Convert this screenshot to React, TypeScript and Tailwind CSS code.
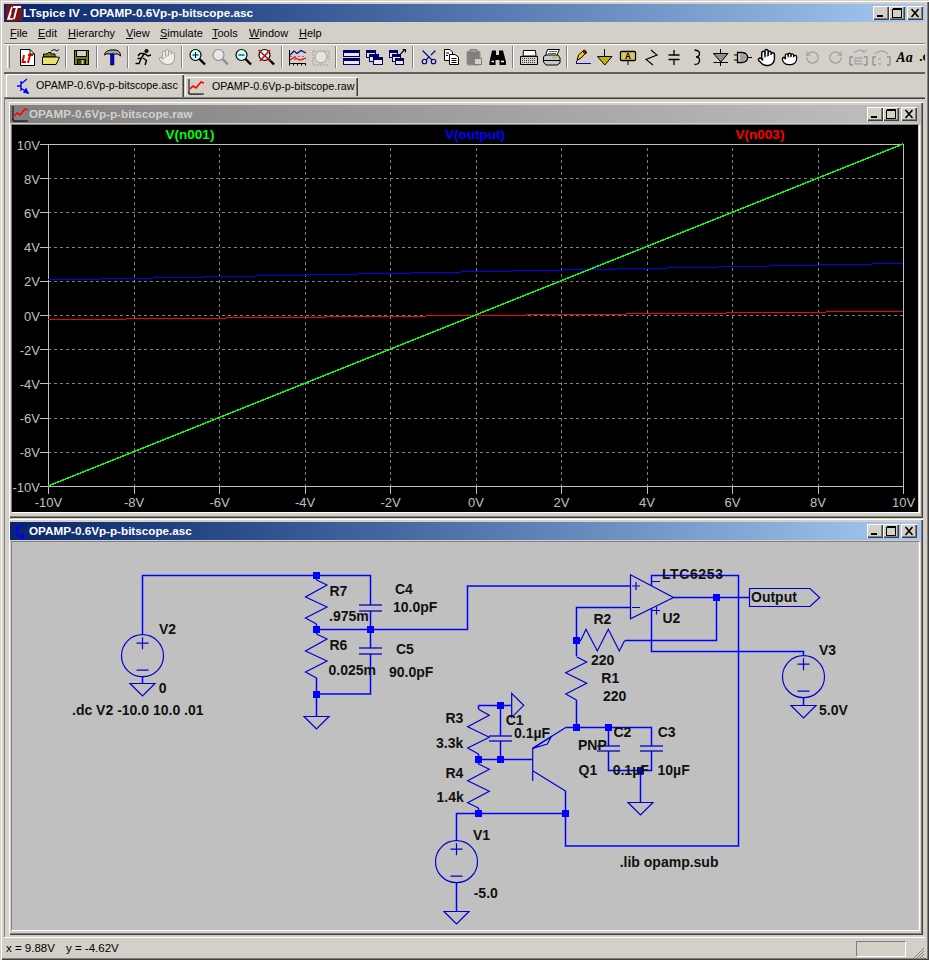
import React from "react";
import { Hand, Grab, Scissors, RotateCcw, RotateCw } from "lucide-react";

const WIRE = "#0000ff";
const SYM = "#0000d0";

const LTLogo = ({ color = "#fff" }: { color?: string }) => (
  <svg width="16" height="16" viewBox="0 0 16 16">
    <rect width="16" height="16" fill="#7a1414" />
    <path d="M6 2 L2 14 H7 M5 7 L3 13" stroke={color} strokeWidth="1.6" fill="none" />
    <path d="M7 2 H15 M11 2 L8 14" stroke={color} strokeWidth="1.8" fill="none" />
  </svg>
);

const TransistorIcon = () => (
  <svg width="16" height="16" viewBox="0 0 16 16" fill="none" stroke="#0000ff" strokeWidth="1.4">
    <path d="M1 8 H5 M5 3 V13 M5 6 L11 1 M5 10 L12 15" />
    <path d="M12 15 L8 14 L10 11 Z" fill="#0000ff" />
  </svg>
);

const PlotIcon = () => (
  <svg width="16" height="16" viewBox="0 0 16 16" fill="none">
    <path d="M1 0 V15 H16" stroke="#000" />
    <path d="M0 13.5 H1 M3 15 V16 M6 15 V16 M9 15 V16 M12 15 V16" stroke="#000" />
    <path d="M2 10 L5 7 L8 9 L13 3 L16 4" stroke="#ff0000" strokeWidth="1.6" />
  </svg>
);

const WinButton = ({ kind }: { kind: "min" | "max" | "close" }) => (
  <div className="w-[16px] h-[14px] bg-[#d4d0c8] shadow-[inset_1px_1px_0_#fff,inset_-1px_-1px_0_#404040,inset_-2px_-2px_0_#808080] flex items-center justify-center">
    <svg width="12" height="10" viewBox="0 0 12 10" shapeRendering="crispEdges" fill="none" stroke="#000">
      {kind === "min" && <path d="M2 8.5 H8 M2 7.5 H8" />}
      {kind === "max" && <path d="M1.5 0.5 H10.5 M1.5 1.5 H10.5 V9.5 H1.5 Z" />}
      {kind === "close" && (
        <g shapeRendering="auto" strokeWidth="1.6">
          <path d="M2.5 1 L9.5 9 M9.5 1 L2.5 9" />
        </g>
      )}
    </svg>
  </div>
);

const WinButtons = () => (
  <div className="flex ml-auto">
    <WinButton kind="min" />
    <WinButton kind="max" />
    <div className="w-[2px]" />
    <WinButton kind="close" />
  </div>
);

const Svg = ({ children }: { children: React.ReactNode }) => (
  <svg width="23" height="24" viewBox="0 0 23 24" fill="none" stroke="#000">
    {children}
  </svg>
);

const Magnifier = ({ off, children }: { off?: boolean; children?: React.ReactNode }) => (
  <>
    <circle cx="9.5" cy="10" r="5.5" fill={off ? "#e8e8e8" : "#c8ffff"} stroke={off ? "#8c8c8c" : "#000"} strokeWidth="1.2" />
    <path d="M13.5 14 L19 19.5" stroke={off ? "#8c8c8c" : "#000"} strokeWidth="2.4" />
    {children}
  </>
);

const MiniWin = ({ x, y, w, h }: { x: number; y: number; w: number; h: number }) => (
  <>
    <rect x={x} y={y} width={w} height={h} fill="#e8e8f0" stroke="#000060" />
    <rect x={x} y={y} width={w} height="2" fill="#000080" stroke="#000060" />
  </>
);

const iconSet: Record<string, React.ReactNode> = {
  new: (
    <Svg>
      <path d="M4.5 4.5 H14 L18.5 9 V20.5 H4.5 Z" fill="#fff" />
      <path d="M14 4.5 V9 H18.5" />
      <path d="M8 10 L6.5 17 H10 M12 10 H17 M14 10 L12 18" stroke="#e00000" strokeWidth="2" />
    </Svg>
  ),
  open: (
    <Svg>
      <path d="M4.5 9 H8 L9.5 7.5 H12 V9 H16 V12 H4.5 Z" fill="#808000" />
      <path d="M3.5 19.5 V12 H18 L20.5 12.5 L17 19.5 Z" fill="#e8e070" />
      <path d="M12 6 Q15 3 18 6 M18 6 L20 4.5 M18 6 L16.5 5" stroke="#202020" />
    </Svg>
  ),
  save: (
    <Svg>
      <rect x="4.5" y="5.5" width="14" height="14" fill="#808000" />
      <rect x="6.5" y="5.5" width="10" height="6" fill="#d4d0c8" stroke="#000" />
      <rect x="7.5" y="14.5" width="8" height="5" fill="#404000" />
      <rect x="11.5" y="15" width="2" height="4" fill="#d4d0c8" stroke="none" />
    </Svg>
  ),
  hammer: (
    <Svg>
      <path d="M3.5 10 Q4 6 9.5 5 H15 Q19.5 6 19.5 11 Q17 8 14 9 H9 Q5.5 8 3.5 10 Z" fill="#a8a8a8" />
      <rect x="9.5" y="9" width="3.5" height="11" fill="#0000e0" stroke="#000" strokeWidth="0.5" />
    </Svg>
  ),
  run: (
    <Svg>
      <circle cx="14.5" cy="6" r="1.6" fill="#000" />
      <path d="M12.5 8.5 L9 13.5 L5.5 13.5 M12.5 8.5 L16 11 L19 10 M12.5 8.5 L8 8.5 L6 11 M11 13 L14.5 15.5 L13 20 M9 14 L7 18.5 L3.5 18.5" strokeWidth="1.4" />
    </Svg>
  ),
  handOff: (
    <div className="w-[23px] h-[24px] flex items-center justify-center">
      <Hand size={18} color="#a8a8a0" fill="#eeeeea" strokeWidth={1.5} />
    </div>
  ),
  zoomIn: (
    <Svg>
      <Magnifier>
        <path d="M6.5 10 H12.5 M9.5 7 V13" />
      </Magnifier>
    </Svg>
  ),
  zoomOff: (
    <Svg>
      <Magnifier off />
    </Svg>
  ),
  zoomOut: (
    <Svg>
      <Magnifier>
        <path d="M6.5 10 H12.5" />
      </Magnifier>
    </Svg>
  ),
  zoomFit: (
    <Svg>
      <Magnifier>
        <path d="M3.5 5 L15.5 16 M15 5 L5 16" stroke="#e00000" strokeWidth="1.6" />
      </Magnifier>
    </Svg>
  ),
  plot: (
    <Svg>
      <path d="M3.5 5 V18.5 H20" />
      <path d="M3.5 18.5 V20.5 M7.5 18.5 V20.5 M11.5 18.5 V20.5 M15.5 18.5 V20.5 M19.5 18.5 V20.5" />
      <path d="M4 14.5 H20 M4 11.5 H20" stroke="#808080" strokeDasharray="2 2" />
      <path d="M4 10 L8 6 L11 8.5 L15 5.5 L20 8" stroke="#000080" strokeWidth="1.1" />
      <path d="M4 15 L8 12.5 L14 15 L20 13" stroke="#ff0000" strokeWidth="1.2" />
    </Svg>
  ),
  plotOff: (
    <Svg>
      <path d="M4 6 V20 H20 M4 6 H8 M15 6 H20 V16" stroke="#a0a0a0" strokeDasharray="2 1" />
      <circle cx="12" cy="12" r="6" stroke="#a0a0a0" fill="#e6e4de" />
    </Svg>
  ),
  tile: (
    <Svg>
      <MiniWin x={3.5} y={5.5} w={16} h={6} />
      <MiniWin x={3.5} y={13.5} w={16} h={6} />
    </Svg>
  ),
  cascade: (
    <Svg>
      <MiniWin x={3.5} y={5.5} w={9} h={7} />
      <MiniWin x={6.5} y={9.5} w={9} h={7} />
      <MiniWin x={10.5} y={12.5} w={9} h={7} />
    </Svg>
  ),
  cascade2: (
    <Svg>
      <MiniWin x={3.5} y={5.5} w={8} h={7} />
      <MiniWin x={6.5} y={9.5} w={8} h={7} />
      <MiniWin x={9.5} y={13.5} w={8} h={6} />
      <path d="M14.5 9 L19 4.5 M16.5 4.5 H19.5 V7.5" strokeWidth="1.1" />
    </Svg>
  ),
  cut: (
    <div className="w-[23px] h-[24px] flex items-center justify-center">
      <Scissors size={18} color="#000080" strokeWidth={1.6} className="-rotate-90" />
    </div>
  ),
  copy: (
    <Svg>
      <path d="M4.5 4.5 H10 L12.5 7 V15.5 H4.5 Z" fill="#fff" />
      <path d="M9.5 9.5 H15 L18.5 12 V19.5 H9.5 Z" fill="#fff" />
      <path d="M6 8 H9 M6 10.5 H8 M11.5 13.5 H16.5 M11.5 15.5 H16.5 M11.5 17.5 H16.5" />
    </Svg>
  ),
  paste: (
    <Svg>
      <rect x="4" y="6" width="13" height="14" rx="1.5" fill="#808080" stroke="#909090" />
      <rect x="7.5" y="4.5" width="6" height="3" fill="#a0a0a0" stroke="#808080" />
      <rect x="11.5" y="13.5" width="7" height="6" fill="#d4d0c8" stroke="#808080" />
    </Svg>
  ),
  binoc: (
    <Svg>
      <path d="M6 5.5 H10 V10 H13 V5.5 H17 L20 17 V20 H13.5 V15 H9.5 V20 H3.5 V17 Z" fill="#000" stroke="none" />
      <path d="M5.5 16.5 H8 M15 16.5 H18" stroke="#fff" strokeWidth="1.4" />
    </Svg>
  ),
  preview: (
    <Svg>
      <path d="M6.5 5.5 H18.5 L19 11 H6 Z" fill="#fff" />
      <path d="M3.5 11.5 H20.5 V19.5 H3.5 Z" fill="#d4d0c8" />
      <path d="M5 13.5 H19 M5 15.5 H19 M5 17.5 H19" stroke="#404040" strokeDasharray="1 1" />
    </Svg>
  ),
  print: (
    <Svg>
      <path d="M7.5 4.5 H19.5 L16.5 11 H5.5 Z" fill="#fff" />
      <path d="M9 6.5 H17 M8 8.5 H16" stroke="#606060" />
      <path d="M3.5 12 Q4 10 7 10 H18 L20 13 V18 L17 20 H6 L3.5 17 Z" fill="#c8c8c8" />
      <path d="M4 15.5 H20" />
      <path d="M12 12.5 H17" stroke="#c0c000" strokeWidth="1.5" />
    </Svg>
  ),
  pencil: (
    <Svg>
      <path d="M6 15.5 L7.5 10 L13 5 L15.5 7 L10 13 Z" fill="#f0d000" />
      <path d="M13 5 L15.5 7 L14.5 9 L11.5 6.5 Z" fill="#e00000" stroke="#000" />
      <path d="M5 18.5 H20" stroke="#0000e0" />
      <path d="M5.5 18.5 V16" />
    </Svg>
  ),
  ground: (
    <Svg>
      <path d="M10.5 4 V11.5" />
      <path d="M3.5 11.5 H18 L10.75 20 Z" fill="#b8b800" />
    </Svg>
  ),
  label: (
    <Svg>
      <rect x="3.5" y="6.5" width="15" height="9" rx="1" fill="#d8c860" strokeWidth="1.3" />
      <text x="11" y="14" textAnchor="middle" fontSize="9" fontFamily="'Liberation Mono',monospace" fontWeight="700" fill="#000" stroke="none">A</text>
      <path d="M11 15.5 V20" />
    </Svg>
  ),
  res: (
    <Svg>
      <path d="M11 5 L17 10 L6 14.5 L13 20" strokeWidth="1.1" />
    </Svg>
  ),
  cap: (
    <Svg>
      <path d="M11 5 V10 M11 14.5 V20 M5.5 10 H16.5 M5.5 14.5 H16.5" strokeWidth="1.3" />
    </Svg>
  ),
  ind: (
    <Svg>
      <path d="M8.5 5 Q14 5.5 13.5 9 Q13 12 10 12 Q14 12 13.5 16 Q13 19.5 8.5 19.5" strokeWidth="1.4" />
    </Svg>
  ),
  diode: (
    <Svg>
      <path d="M11.5 4 V8.5 M11.5 17 V21 M4.5 17.5 H19" />
      <path d="M4.5 8.5 H19 L11.75 17 Z" fill="#909090" />
    </Svg>
  ),
  gate: (
    <Svg>
      <path d="M2 10 H5 M2 15 H5 M15 12.5 H20" />
      <path d="M5.5 7.5 H10 Q15.5 8 15.5 12.5 Q15.5 17 10 17.5 H5.5 Z" fill="#d4d0c8" strokeWidth="1.3" />
      <path d="M8 8.5 H10 Q14 9 14 12.5 Q14 16 10 16.5 H8 Z" fill="#a0a0a0" stroke="none" />
    </Svg>
  ),
  handOpen: (
    <div className="w-[23px] h-[24px] flex items-center justify-center">
      <Hand size={19} color="#000" fill="#fff" strokeWidth={1.8} />
    </div>
  ),
  handFist: (
    <div className="w-[23px] h-[24px] flex items-center justify-center">
      <Grab size={17} color="#000" fill="#fff" strokeWidth={1.8} />
    </div>
  ),
  undo: (
    <div className="w-[23px] h-[24px] flex items-center justify-center">
      <RotateCcw size={15} color="#a0a0a0" strokeWidth={2} />
    </div>
  ),
  redo: (
    <div className="w-[23px] h-[24px] flex items-center justify-center">
      <RotateCw size={15} color="#a0a0a0" strokeWidth={2} />
    </div>
  ),
  rot: (
    <Svg>
      <path d="M3 20 V12 H6 M3 20 H6 M20 20 V12 H17 M20 20 H17" stroke="#909090" strokeWidth="1.3" />
      <path d="M8 13 H16 M8 16 H15 M8 19 H16 M8 13 V19" stroke="#a8a8a8" strokeWidth="1.3" />
      <path d="M7 8 Q12 3 18 7 M18 7 L20 4.5 M18 7 L15 7" stroke="#a8a8a8" strokeWidth="1.2" />
    </Svg>
  ),
  mir: (
    <Svg>
      <path d="M3 20 V12 H6 M3 20 H6 M20 20 V12 H17 M20 20 H17" stroke="#909090" strokeWidth="1.3" />
      <path d="M8 14 H11 M8 19 H11" stroke="#a8a8a8" strokeWidth="1.3" />
      <path d="M5 9 Q11 3 18 9" stroke="#a8a8a8" strokeWidth="1.2" />
    </Svg>
  ),
  text: (
    <div className="w-[23px] h-[24px] flex items-center justify-center font-['Liberation_Serif',serif] italic font-bold text-[14px] text-black">Aa</div>
  ),
  op: (
    <div className="w-[23px] h-[24px] flex items-center pl-[3px] font-['Liberation_Sans',sans-serif] font-bold text-[13px] text-black">.op</div>
  ),
};

const groups: string[][] = [
  ["new", "open"],
  ["save"],
  ["hammer"],
  ["run", "handOff"],
  ["zoomIn", "zoomOff", "zoomOut", "zoomFit"],
  ["plot", "plotOff"],
  ["tile", "cascade", "cascade2"],
  ["cut", "copy", "paste", "binoc"],
  ["preview", "print"],
  ["pencil", "ground", "label", "res", "cap", "ind", "diode", "gate", "handOpen", "handFist", "undo", "redo", "rot", "mir", "text", "op"],
];

const ToolSep = () => (
  <div className="w-[8px] h-[24px] flex justify-center shrink-0">
    <div className="w-[2px] h-[22px] mt-px border-l border-[#808080] border-r border-r-white" />
  </div>
);

const Toolbar = () => (
  <div className="h-[29px] mx-[4px] flex items-start pt-[1px] overflow-hidden border-t border-[#808080] shadow-[inset_0_1px_0_#fff] shrink-0">
    <div className="w-[3px] h-[22px] ml-[3px] mr-[6px] mt-px shrink-0 border-l border-white border-r border-r-[#808080]" />
    {groups.map((g, i) => (
      <React.Fragment key={i}>
        {i > 0 && <ToolSep />}
        {g.map((n) => (
          <div key={n} className="w-[23px] h-[24px] shrink-0">
            {iconSet[n]}
          </div>
        ))}
      </React.Fragment>
    ))}
  </div>
);

const menus: [string, string, string][] = [
  ["F", "ile", "w-[28px]"],
  ["E", "dit", "w-[30px]"],
  ["H", "ierarchy", "w-[58px]"],
  ["V", "iew", "w-[34px]"],
  ["S", "imulate", "w-[52px]"],
  ["T", "ools", "w-[37px]"],
  ["W", "indow", "w-[50px]"],
  ["H", "elp", "w-[40px]"],
];

const Tab = ({ active, icon, label }: { active?: boolean; icon: React.ReactNode; label: string }) => (
  <div
    className={
      active
        ? "w-[178px] h-[23px] flex items-center pl-[10px] bg-[#d4d0c8] shadow-[inset_1px_1px_0_#fff,inset_-1px_0_0_#404040,inset_-2px_0_0_#808080]"
        : "w-[173px] h-[19px] mb-[1px] ml-px flex items-center pl-[3px] bg-[#d4d0c8] shadow-[inset_1px_1px_0_#fff,inset_-1px_0_0_#404040,inset_-2px_0_0_#808080]"
    }
  >
    <div className={active ? "w-[20px] shrink-0" : "w-[24px] shrink-0"}>{icon}</div>
    <span className="text-[10.7px] whitespace-nowrap text-black">{label}</span>
  </div>
);

const Win = ({
  h,
  active,
  icon,
  title,
  children,
}: {
  h: string;
  active?: boolean;
  icon: React.ReactNode;
  title: string;
  children: React.ReactNode;
}) => (
  <div className={`${h} w-[915px] shrink-0 pt-[4px] pl-[2px] pr-[2px] bg-[#d4d0c8] shadow-[inset_1px_1px_0_#d4d0c8,inset_2px_2px_0_#fff,inset_-1px_-1px_0_#404040,inset_-2px_-2px_0_#808080]`}>
    <div
      className={
        active
          ? "h-[18px] flex items-center pl-[2px] pr-[4px] bg-linear-to-r from-[#0a246a] to-[#a6caf0]"
          : "h-[18px] flex items-center pl-[2px] pr-[4px] bg-linear-to-r from-[#808080] to-[#c0c0c0]"
      }
    >
      <div className="w-[16px] shrink-0 mr-px">{icon}</div>
      <span className={active ? "font-['Liberation_Sans',sans-serif] font-bold text-[11.7px] text-white whitespace-nowrap" : "font-['Liberation_Sans',sans-serif] font-bold text-[11.7px] text-[#d4d0c8] whitespace-nowrap"}>
        {title}
      </span>
      <WinButtons />
    </div>
    <div className="mt-px ml-px mr-px border-t border-l border-[#808080] border-r border-b border-r-white border-b-white">{children}</div>
  </div>
);

const xs = [-10, -8, -6, -4, -2, 0, 2, 4, 6, 8, 10];
const X0 = 48;
const X1 = 903;
const Y0 = 486;
const Y1 = 144;
const px = (v: number) => X0 + ((v + 10) / 20) * (X1 - X0) + 0.5;
const py = (v: number) => Y0 - ((v + 10) / 20) * (Y0 - Y1) + 0.5;

const blue: [number, number, number][] = [
  [48, 102, 279],
  [102, 153, 278],
  [153, 204, 277],
  [204, 256, 276],
  [256, 307, 275],
  [307, 358, 274],
  [358, 410, 273],
  [410, 461, 272],
  [461, 512, 271],
  [512, 564, 270],
  [564, 615, 269],
  [615, 667, 268],
  [667, 718, 267],
  [718, 769, 266],
  [769, 820, 265],
  [820, 872, 264],
  [872, 903, 263],
];
const red: [number, number, number][] = [
  [48, 126, 319],
  [126, 226, 318],
  [226, 326, 317],
  [326, 426, 316],
  [426, 526, 315],
  [526, 626, 314],
  [626, 726, 313],
  [726, 826, 312],
  [826, 903, 311],
];

const Plot = () => (
  <svg width="906" height="387" viewBox="12 125 906 387" className="block bg-black font-['Liberation_Sans',sans-serif]">
    <g shapeRendering="crispEdges">
      {xs.slice(1, -1).map((v) => (
        <g key={v}>
          <line x1={px(v)} x2={px(v)} y1={Y1 + 4} y2={Y0} stroke="#808080" strokeDasharray="3 3" />
          <line x1={X0} x2={X1} y1={py(v)} y2={py(v)} stroke="#808080" strokeDasharray="3 3" />
        </g>
      ))}
      <rect x={X0 + 0.5} y={Y1 + 0.5} width={X1 - X0} height={Y0 - Y1} fill="none" stroke="#c0c0c0" />
      {xs.map((v) => (
        <g key={v}>
          <line x1={px(v)} x2={px(v)} y1={Y0} y2={Y0 + 8} stroke="#c0c0c0" />
          <line x1={X0 - 8} x2={X0} y1={py(v)} y2={py(v)} stroke="#c0c0c0" />
        </g>
      ))}
      {blue.map(([a, b, y]) => (
        <rect key={a} x={a} y={y} width={b - a} height="1" fill="#0000ff" />
      ))}
      {red.map(([a, b, y]) => (
        <rect key={a} x={a} y={y} width={b - a} height="1" fill="#ff0000" />
      ))}
      <line x1={X0} y1={Y0} x2={X1} y2={Y1} stroke="#00ff00" strokeWidth="1.5" />
    </g>
    {xs.map((v) => (
      <text key={v} x={X0 - 8} y={py(v) + 5} textAnchor="end" fontSize="13" fill="#c0c0c0">
        {v}V
      </text>
    ))}
    {xs.map((v) => (
      <text key={v} x={px(v)} y="506.5" textAnchor="middle" fontSize="13" fill="#c0c0c0">
        {v}V
      </text>
    ))}
    <text x="190" y="139" textAnchor="middle" fontSize="13.5" fontWeight="700" fill="#00ff00">V(n001)</text>
    <text x="475" y="139" textAnchor="middle" fontSize="13.5" fontWeight="700" fill="#0000ff">V(output)</text>
    <text x="760" y="139" textAnchor="middle" fontSize="13.5" fontWeight="700" fill="#ff0000">V(n003)</text>
  </svg>
);

const wires = [
  "M142.5 634 V575.5 H370.5 V605",
  "M370.5 611 V648",
  "M370.5 654 V694 H316.5",
  "M316.5 629.5 H467.5 V586 H630.5",
  "M630.5 607.5 H576.5 V656",
  "M576.5 640.5 H581",
  "M673.5 597.5 H749",
  "M716.5 597.5 V640.5 H625",
  "M651.5 586 V575.5 H738.5 V846 H565.5 V791 M651.5 608 V651.5 H803.5 V656",
  "M576.5 700 V727.5",
  "M565.5 727.5 H651.5 V746",
  "M651.5 751 V770.5 H608.5 V751",
  "M608.5 727.5 V746",
  "M640.5 770.5 V803",
  "M478.5 705.5 H511.5",
  "M500.5 705.5 V736",
  "M500.5 741 V759.5",
  "M478.5 759.5 H532.5",
  "M456.5 841 V813.5 H565.5",
  "M456.5 883 V911",
  "M142.5 677 V683",
  "M316.5 694 V716",
  "M803.5 698 V705",
  "M478.5 705.5 V709",
  "M478.5 754 V764",
  "M478.5 808 V813.5",
  "M316.5 575.5 V580",
  "M316.5 624 V634",
  "M316.5 678 V694",
];

const zigs = [
  "316.5,580 327,585 305.5,597 327,607 305.5,618 316.5,624",
  "316.5,634 327,639 305.5,651 327,661 305.5,672 316.5,678",
  "580.7,640.5 586,629.3 597.3,651 608.3,629.3 619.3,651 624.7,640.5",
  "576.5,656.7 586.7,662 565.7,672.7 586.7,683.3 565.7,694 576.5,700",
  "478.5,709.3 489.3,715.3 467.7,726.7 489.3,737.3 467.7,748 478.5,754",
  "478.5,764 489.3,769.3 467.7,780.7 489.3,791.3 467.7,802.7 478.5,808",
];

const plates = [
  [359, 382, 605],
  [359, 382, 611],
  [359, 382, 648],
  [359, 382, 654],
  [597, 620, 746],
  [597, 620, 751],
  [640, 663, 746],
  [640, 663, 751],
  [489, 512, 736],
  [489, 512, 741],
];

const grounds: [number, number][] = [
  [142.5, 683.5],
  [316.5, 716.5],
  [803.5, 705.5],
  [640.5, 802.5],
  [456.5, 911.5],
];

const sources: [number, number][] = [
  [142.5, 655.7],
  [803.5, 676.7],
  [456.5, 861.7],
];

const dots: [number, number][] = [
  [316.5, 575.5],
  [316.5, 629.5],
  [370.5, 629.5],
  [316.5, 694],
  [716.5, 597.5],
  [576.5, 640.5],
  [576.5, 727.5],
  [608.5, 727.5],
  [640.5, 770.5],
  [500.5, 705.5],
  [478.5, 759.5],
  [500.5, 759.5],
  [478.5, 813.5],
  [565.5, 813.5],
];

const labels: [string, number, number][] = [
  ["V2", 159, 634],
  ["0", 158.7, 693],
  [".dc V2 -10.0 10.0 .01", 72, 715],
  ["R7", 329.5, 595.7],
  [".975m", 329, 621],
  ["R6", 329.5, 650],
  ["0.025m", 328.5, 674.7],
  ["C4", 395, 593.7],
  ["10.0pF", 393, 611.7],
  ["C5", 396, 653.7],
  ["90.0pF", 389, 676.7],
  ["U2", 662.5, 622.7],
  ["R2", 593.5, 624.3],
  ["220", 591, 664.7],
  ["R1", 601.3, 682.7],
  ["220", 603, 701.3],
  ["V3", 819, 655.3],
  ["5.0V", 819, 714.7],
  ["Output", 751, 601.7],
  ["R3", 445.5, 722.7],
  ["3.3k", 436, 748],
  ["R4", 445.5, 778.3],
  ["1.4k", 436.5, 801.7],
  ["C1", 505.7, 725],
  ["0.1µF", 514, 738.3],
  ["PNP", 578, 750],
  ["Q1", 578.5, 775],
  ["C2", 613.5, 736.7],
  ["C3", 657.7, 736.7],
  ["0.1µF", 612.7, 775],
  ["10µF", 657.5, 775],
  ["V1", 473, 839.7],
  ["-5.0", 473.7, 898.3],
  [".lib opamp.sub", 619.7, 866.7],
];

const Schematic = () => (
  <svg width="906" height="388" viewBox="12 542 906 388" className="block bg-[#c0c0c0] font-['Liberation_Sans',sans-serif]" fill="none">
    <g stroke={WIRE} strokeWidth="1.5">
      {wires.map((d, i) => (
        <path key={i} d={d} />
      ))}
    </g>
    <g stroke={SYM} strokeWidth="1.2">
      {zigs.map((p, i) => (
        <polyline key={i} points={p} />
      ))}
      {plates.map(([a, b, y], i) => (
        <line key={i} x1={a} x2={b} y1={y} y2={y} strokeWidth="1.3" />
      ))}
      {grounds.map(([x, y], i) => (
        <polygon key={i} points={`${x - 12.5},${y} ${x + 12.5},${y} ${x},${y + 12.5}`} />
      ))}
      {sources.map(([x, y], i) => (
        <g key={i}>
          <circle cx={x} cy={y} r="21" />
          <path d={`M${x - 6} ${y - 12.5} H${x + 6} M${x} ${y - 18.5} V${y - 6.5} M${x - 6} ${y + 14.5} H${x + 6}`} />
        </g>
      ))}
      <polygon points="630.5,574.7 673.5,597.5 630.5,618.7" />
      <path d="M632 586 H640 M636 582 V590 M632 607.5 H640 M652 581.5 H660 M652 610.5 H660 M656.5 606.5 V614.5" />
      <polygon points="749.5,588.5 810,588.5 819.7,597.5 810,606.5 749.5,606.5" />
      <polygon points="511.7,693.3 523.7,705.3 511.7,717.3" />
      <path d="M532.7 748 V781 M532.7 748.3 L565.7 727.5 M532.7 770.7 L565.5 791" />
      <polygon points="532.7,748.3 547.3,744 551.3,736.7" />
    </g>
    <g fill="#0000ff" shapeRendering="crispEdges">
      {dots.map(([x, y], i) => (
        <rect key={i} x={x - 3.5} y={y - 3.5} width="7" height="7" />
      ))}
    </g>
    <g fill="#111" fontSize="14" fontWeight="700">
      {labels.map(([t, x, y], i) => (
        <text key={i} x={x} y={y}>
          {t}
        </text>
      ))}
      <text x="662" y="579.3" letterSpacing="0.6">LTC6253</text>
    </g>
  </svg>
);

export default function App() {
  return (
    <div className="relative w-[929px] h-[960px] overflow-hidden flex flex-col bg-[#d4d0c8] text-black font-['Liberation_Sans',sans-serif] shadow-[inset_1px_1px_0_#d4d0c8,inset_2px_2px_0_#fff,inset_-1px_-1px_0_#404040,inset_-2px_-2px_0_#808080]">
      <div className="h-[18px] mx-[4px] mt-[4px] flex items-center pl-[2px] pr-[2px] bg-linear-to-r from-[#0a246a] to-[#a6caf0] shrink-0">
        <div className="w-[16px] shrink-0 mr-px">
          <LTLogo />
        </div>
        <span className="font-bold text-[11.7px] text-white whitespace-nowrap">LTspice IV - OPAMP-0.6Vp-p-bitscope.asc</span>
        <WinButtons />
      </div>
      <div className="h-[20px] mx-[4px] mt-px pl-[6px] flex items-center text-[11px] shrink-0">
        {menus.map(([a, b, w], i) => (
          <div key={i} className={`${w} shrink-0`}>
            <span className="underline">{a}</span>
            {b}
          </div>
        ))}
      </div>
      <Toolbar />
      <div className="h-[25px] mx-[4px] pl-[2px] flex items-end border-t-2 border-[#606060] shrink-0">
        <Tab active icon={<TransistorIcon />} label="OPAMP-0.6Vp-p-bitscope.asc" />
        <Tab icon={<PlotIcon />} label="OPAMP-0.6Vp-p-bitscope.raw" />
      </div>
      <div className="flex-1 ml-[4px] mr-[4px] pl-[3px] pt-[3px] flex flex-col border-t border-l border-[#808080] shadow-[inset_0_1px_0_#404040]">
        <Win h="h-[417px]" icon={<PlotIcon />} title="OPAMP-0.6Vp-p-bitscope.raw">
          <Plot />
        </Win>
        <Win h="h-[417px]" active icon={<TransistorIcon />} title="OPAMP-0.6Vp-p-bitscope.asc">
          <Schematic />
        </Win>
      </div>
      <div className="h-[23px] mx-[4px] pl-[2px] flex items-center text-[11.5px] shrink-0 border-t border-white">
        <span className="w-[60px]">x = 9.88V</span>
        <span>y = -4.62V</span>
        <div className="ml-auto mr-[2px] w-[50px] h-[16px] border-t border-l border-[#808080] border-r border-b border-r-white border-b-white" />
        <svg width="17" height="14" viewBox="0 0 17 14" className="shrink-0 mt-[6px]" stroke="#808080">
          <path d="M16 3 L5 14 M16 6 L8 14 M16 9 L11 14 M16 12 L14 14" />
        </svg>
      </div>
    </div>
  );
}
